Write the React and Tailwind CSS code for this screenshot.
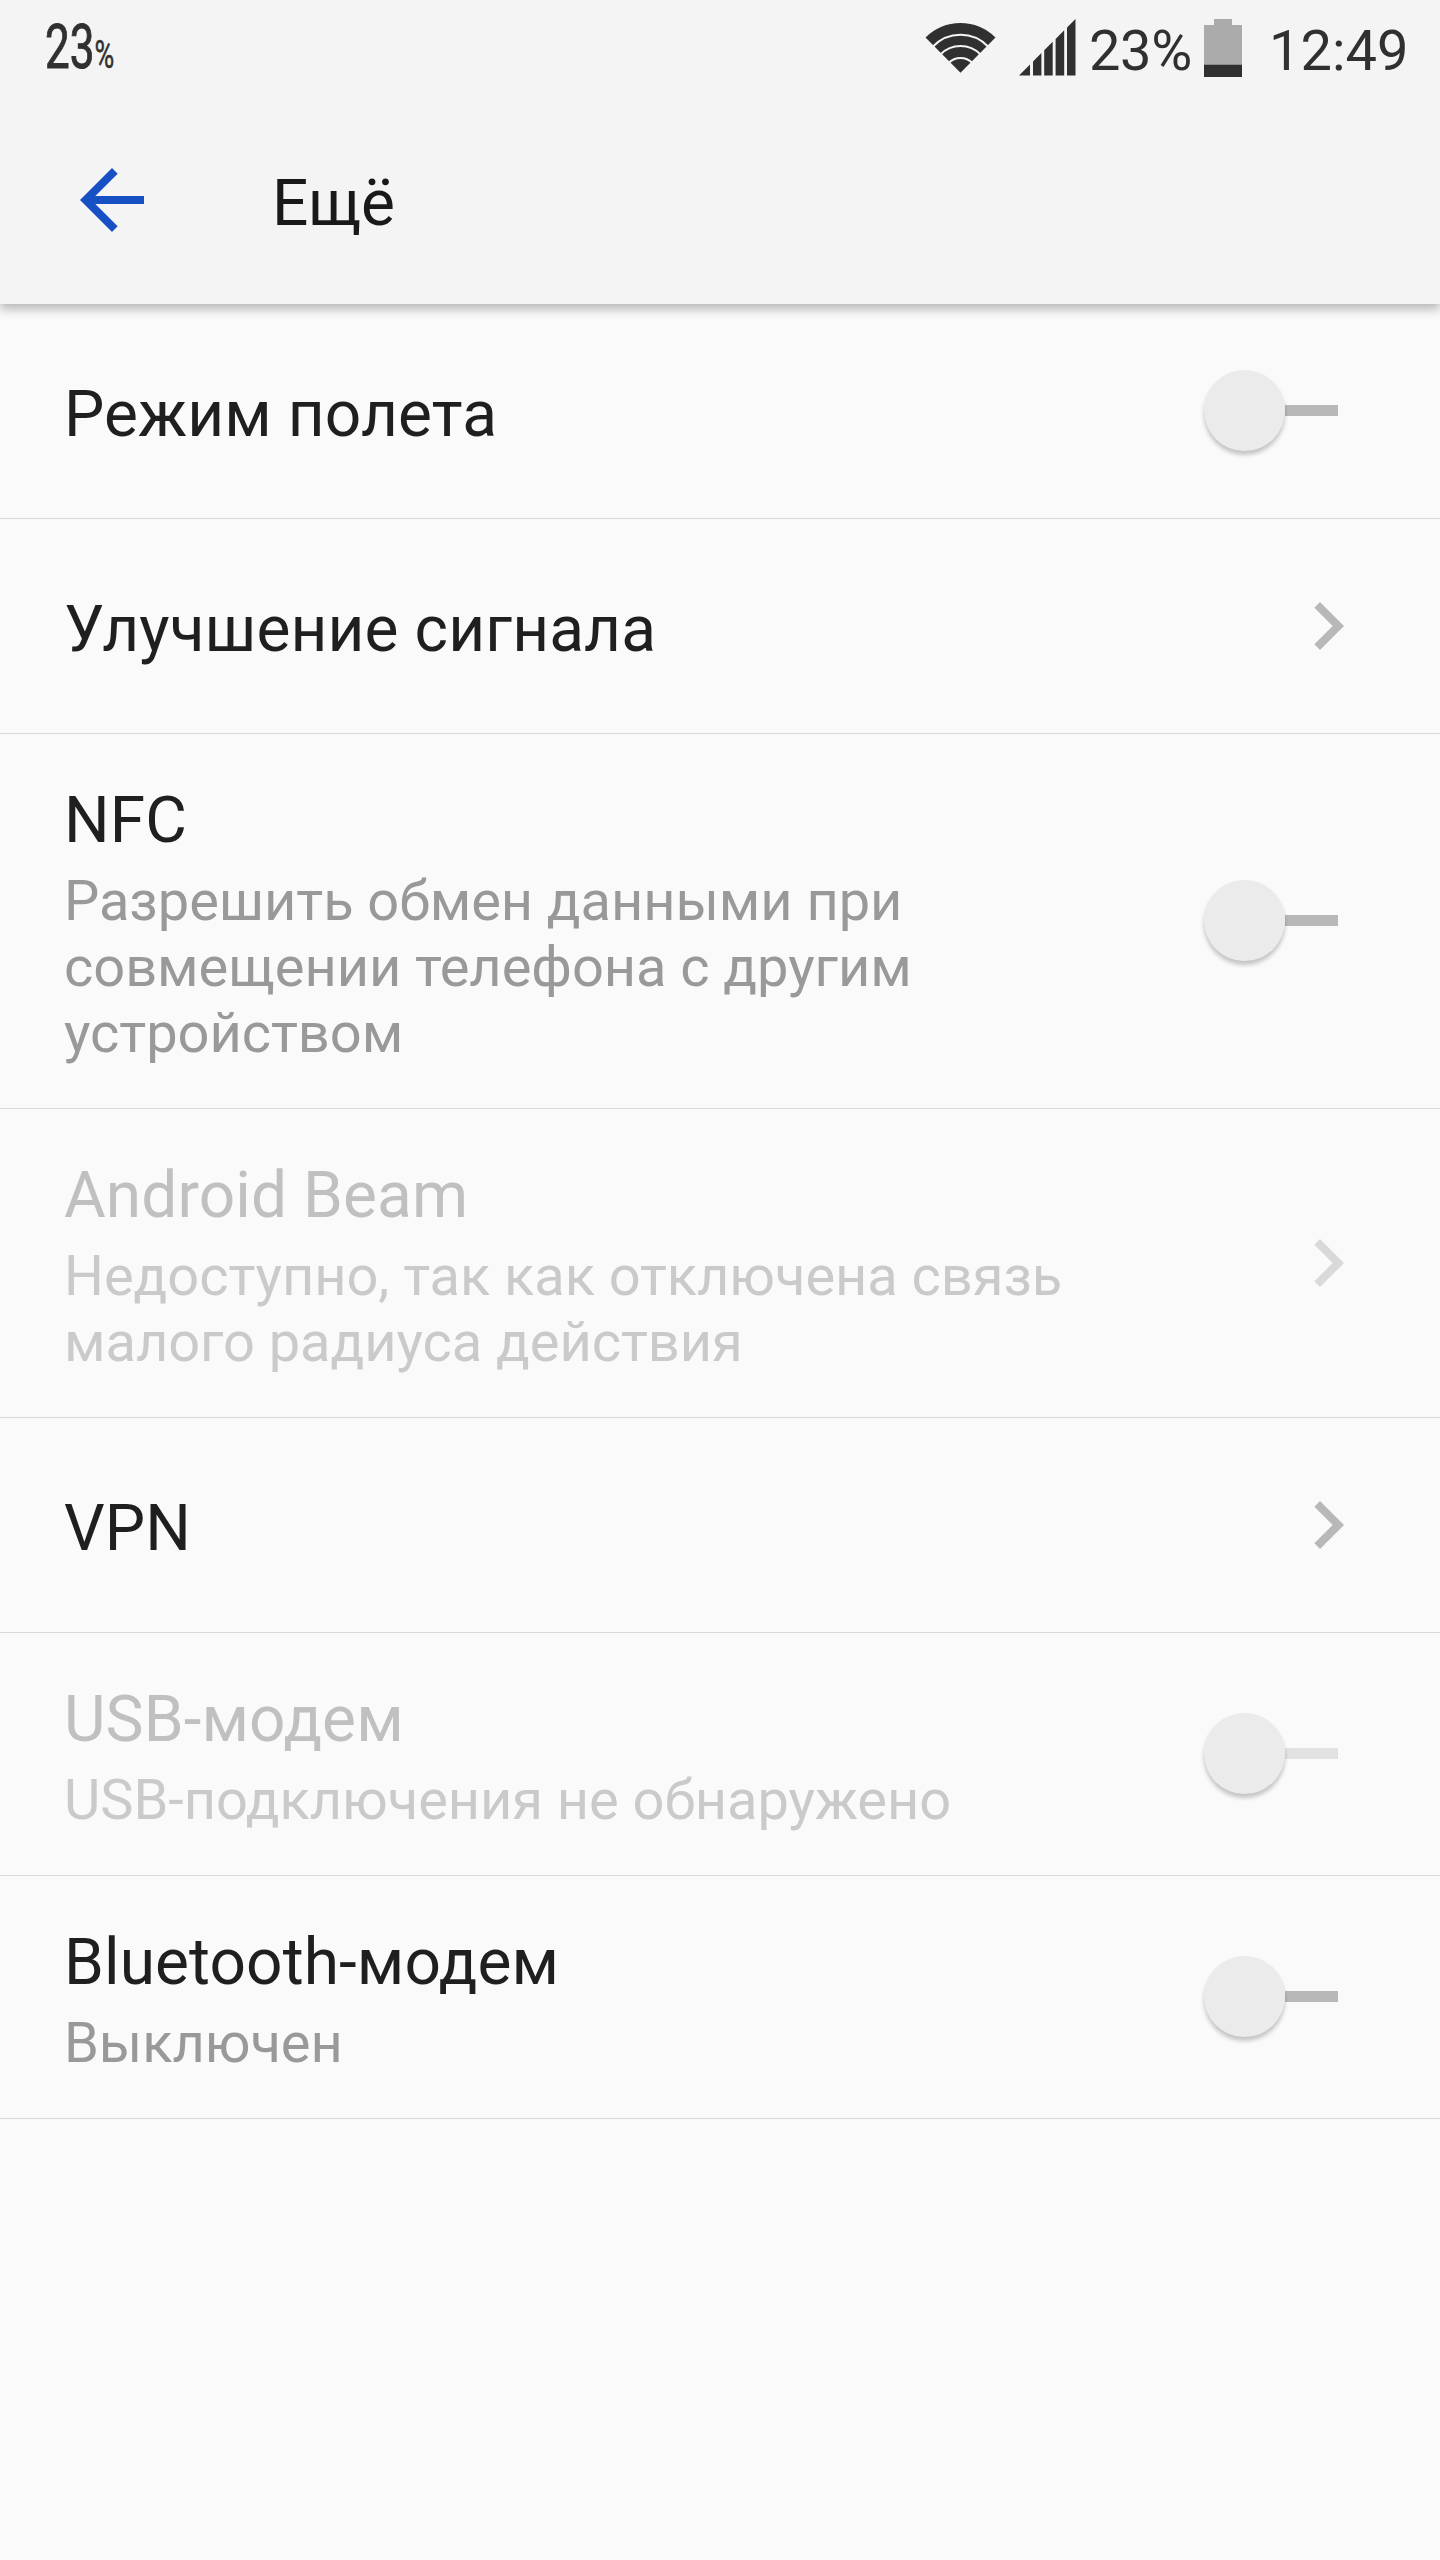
import React from 'react'
import clsx from 'clsx'

const settings = [
    { title: 'Режим полета', control: 'switch' },
    { title: 'Улучшение сигнала', control: 'link' },
    {
        title: 'NFC',
        summary: 'Разрешить обмен данными при совмещении телефона с другим устройством',
        control: 'switch',
    },
    {
        title: 'Android Beam',
        summary: 'Недоступно, так как отключена связь малого радиуса действия',
        control: 'link',
        disabled: true,
    },
    { title: 'VPN', control: 'link' },
    {
        title: 'USB-модем',
        summary: 'USB-подключения не обнаружено',
        control: 'switch',
        disabled: true,
    },
    { title: 'Bluetooth-модем', summary: 'Выключен', control: 'switch' },
]

function WifiIcon() {
    return (
        <svg className="w-[72px] h-[52px] shrink-0" viewBox="0 0 72 52">
            <path d="M1.500 15.500A49.500 49.500 0 0 1 71.500 15.500L36.500 50.700z" fill="#303030" />
            <g fill="none" stroke="#f4f4f4" strokeWidth="2">
                <path d="M9 24.500A38 38 0 0 1 64 24.500" />
                <path d="M16.500 32.500A28 28 0 0 1 56.500 32.500" />
                <path d="M24.500 41A17 17 0 0 1 48.500 41" />
            </g>
        </svg>
    )
}

function SignalIcon() {
    return (
        <svg className="w-[57px] h-[57px] shrink-0" viewBox="0 0 57 57" fill="#303030">
            <path d="M0 56.500L11 45.500V56.500z" />
            <path d="M14 42.500L22.400 34.100V56.500H14z" />
            <path d="M25.200 31.300L33.700 22.800V56.500H25.200z" />
            <path d="M36.600 19.900L45.200 11.300V56.500H36.600z" />
            <path d="M48 8.500L56.500 0V56.500H48z" />
        </svg>
    )
}

function BatteryIcon() {
    return (
        <svg className="w-[38px] h-[58px] shrink-0" viewBox="0 0 38 58">
            <path d="M10 0h18v6h10v40H0V6h10z" fill="#ababab" />
            <path d="M0 45.700h38V58H0z" fill="#303030" />
        </svg>
    )
}

function Switch({ disabled }) {
    return (
        <div className="mr-[102px] mb-px flex items-center shrink-0">
            <div className="relative size-[81px] rounded-full bg-[#ebebeb] shadow-[0_4px_4px_rgba(0,0,0,0.22)]" />
            <div className={clsx('h-[11px] w-[53px]', disabled ? 'bg-[#e2e2e2]' : 'bg-[#b8b8b8]')} />
        </div>
    )
}

function Chevron({ disabled }) {
    return (
        <svg
            viewBox="0 0 24 24"
            className={clsx('mr-16 size-24 shrink-0', disabled ? 'fill-[#d9d9d9]' : 'fill-[#b8b8b8]')}
        >
            <path d="M10 6L8.590 7.410 13.170 12l-4.580 4.590L10 18l6-6z" />
        </svg>
    )
}

function SettingRow({ title, summary, control, disabled }) {
    return (
        <li className="flex items-center justify-between border-b border-[#d9d9d9] pl-16">
            <div className={clsx('w-[1100px]', summary ? 'pt-[49px] pb-[42px]' : 'pt-[73px] pb-[66px]')}>
                <h2 className={clsx('text-[64px] leading-[75px] tracking-[0.1px]', disabled ? 'text-[#c0c0c0]' : 'text-[#1f1f1f]')}>
                    {title}
                </h2>
                {summary && (
                    <p className={clsx('mt-2.5 text-[56px] leading-[66px] tracking-[-0.06px]', disabled ? 'text-[#cacaca]' : 'text-[#999999]')}>
                        {summary}
                    </p>
                )}
            </div>
            {control === 'switch' ? <Switch disabled={disabled} /> : <Chevron disabled={disabled} />}
        </li>
    )
}

function App() {
    return (
        <div className="min-h-[2560px] w-[1440px] overflow-hidden bg-[#fafafa] font-['Roboto',sans-serif]">
            <header className="relative h-[304px] bg-[#f4f4f4] shadow-[0_5px_10px_rgba(0,0,0,0.28)]">
                {/* status bar */}
                <div className="flex h-24 justify-between pl-[45px] text-[#303030]">
                    <div className="flex w-20 origin-left scale-x-[0.71] items-baseline pt-2.5 whitespace-nowrap">
                        <span className="text-[62px] leading-[73px] [-webkit-text-stroke:1px_#303030]">23</span>
                        <span className="text-[38px] leading-[43px] [-webkit-text-stroke:0.5px_#303030]">%</span>
                    </div>
                    <div className="flex items-start text-[56px] leading-[66px]">
                        <div className="mt-[22px]"><WifiIcon /></div>
                        <div className="mt-[19px] ml-[23px]"><SignalIcon /></div>
                        <span className="mt-[18px] ml-[13px] w-[104px] tracking-[-0.4px]">23%</span>
                        <div className="mt-[19px] ml-[11px]"><BatteryIcon /></div>
                        <span className="mt-[18px] ml-[27px] w-[171px]">12:49</span>
                    </div>
                </div>

                <div className="flex items-center pt-14 pl-16">
                    <svg viewBox="0 0 24 24" className="size-24 fill-[#1650c4]">
                        <path d="M20 11H7.830l5.590-5.590L12 4l-8 8 8 8 1.410-1.410L7.830 13H20v-2z" />
                    </svg>
                    <h1 className="mt-1.5 ml-28 text-[64px] leading-[75px] tracking-[-0.3px] text-[#191919]">Ещё</h1>
                </div>
            </header>

            <ul>
                {settings.map((item) => (
                    <SettingRow key={item.title} {...item} />
                ))}
            </ul>
        </div>
    )
}

export default App
